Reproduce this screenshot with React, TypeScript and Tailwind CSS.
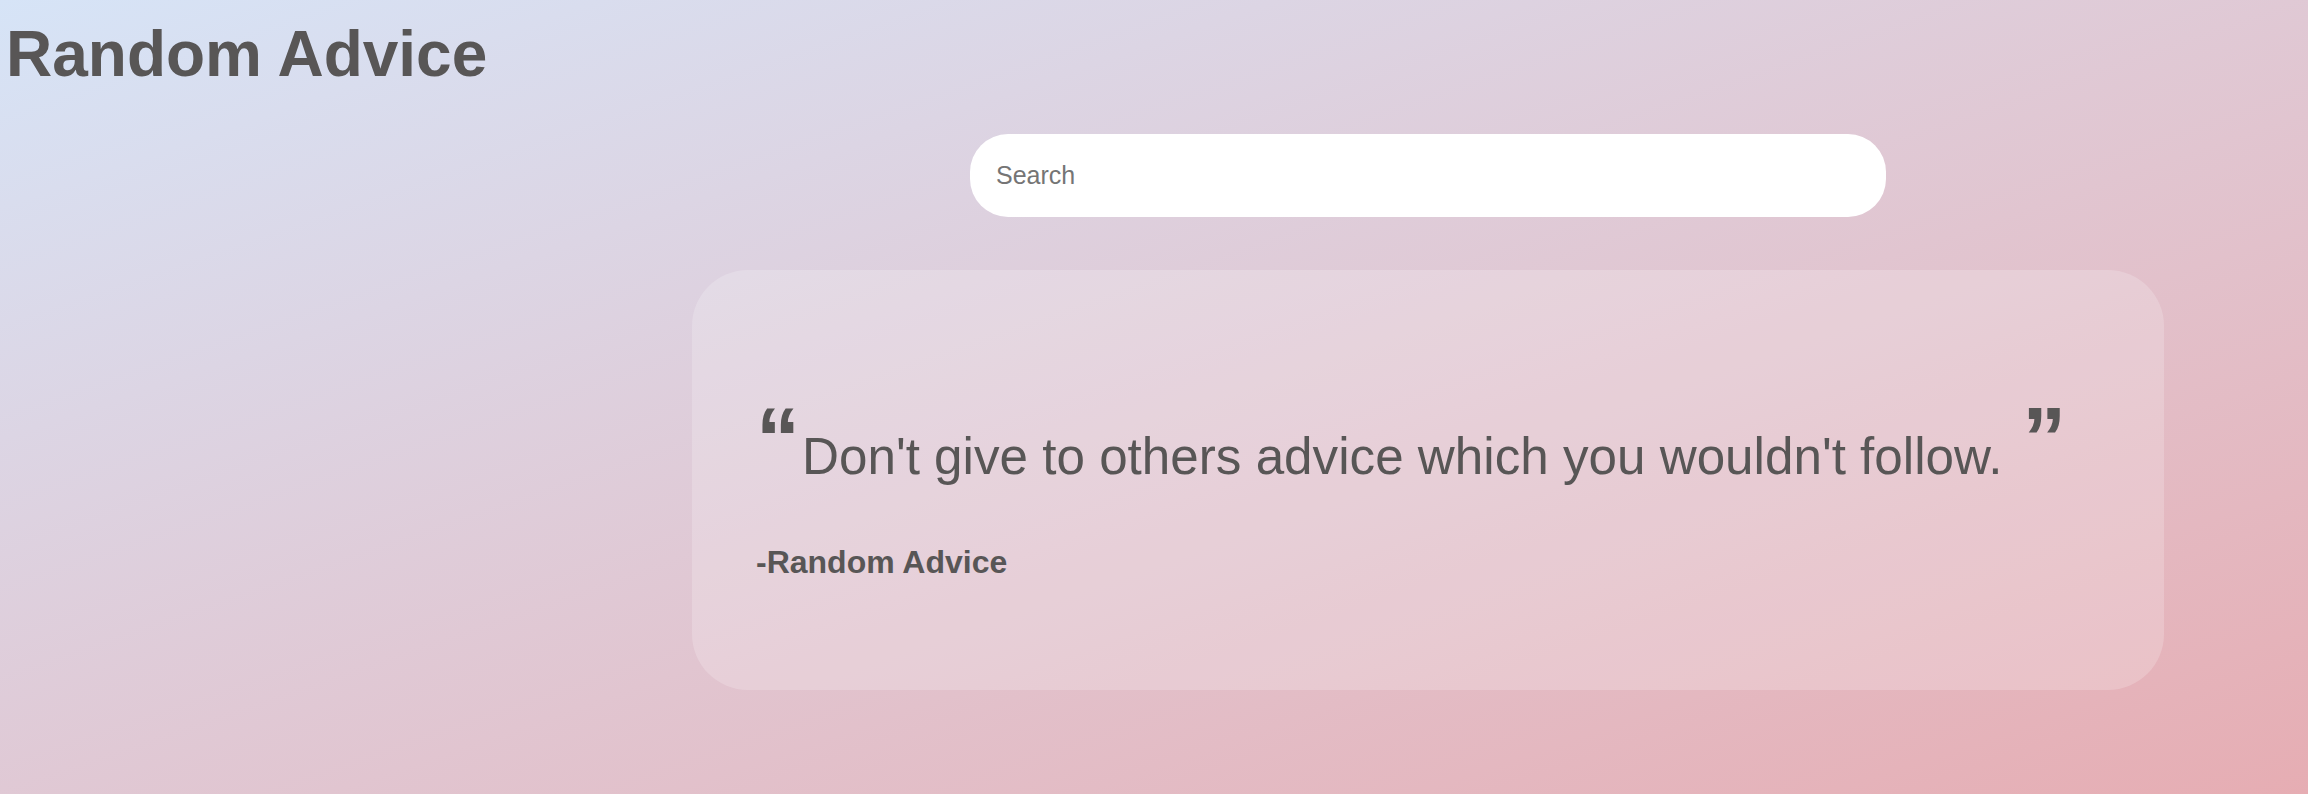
import { useState } from "react";

const advice = {
  text: "Don't give to others advice which you wouldn't follow.",
  author: "Random Advice",
};

export default function App() {
  const [query, setQuery] = useState("");

  return (
    <div className="min-h-[794px] w-full bg-gradient-to-br from-[#d6e4f7] to-[#e6adb3] font-['Liberation_Sans',Arial,Helvetica,sans-serif] text-[#585656]">
      <h1 className="pl-[6px] pt-[22px] text-[64px] font-bold leading-none">Random Advice</h1>

      <main className="ml-[548px] flex flex-col items-center">
        {/* Search */}
        <input
          value={query}
          onChange={(e) => setQuery(e.target.value)}
          placeholder="Search"
          className="mt-[48px] h-[83px] w-[916px] rounded-[38px] bg-white pl-[26px] text-[25px] text-[#585656] outline-none placeholder:text-[#757575]"
        />

        {/* Advice card */}
        <div className="mt-[53px] w-[1472px] rounded-[56px] bg-white/20 px-[64px] pt-[124px] pb-[112px]">
          <div className="flex items-start">
            <span className="mr-[2px] text-[88px] font-bold leading-none">“</span>
            <p className="mt-[37px] text-[51.2px] leading-none">{advice.text}</p>
            <span className="ml-[20px] text-[88px] font-bold leading-none">”</span>
          </div>
          <p className="mt-[64px] text-[32px] font-bold leading-none">-{advice.author}</p>
        </div>
      </main>
    </div>
  );
}
